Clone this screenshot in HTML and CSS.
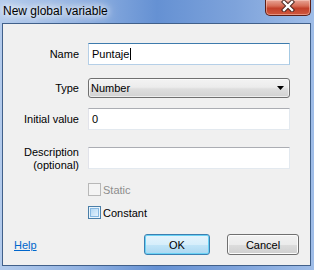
FILE: index.html
```html
<!DOCTYPE html>
<html lang="en">
<head>
  <meta charset="UTF-8">
  <meta name="viewport" content="width=device-width, initial-scale=1.0">
  <title>New global variable</title>
  <link rel="stylesheet" href="styles.css">
</head>
<body>
  <div class="window">
    <div class="titlebar">
      <span class="title">New global variable</span>
      <span class="close-btn">
        <svg width="14" height="12" viewBox="0 0 14 12">
          <path d="M3 2 L11 10 M11 2 L3 10" stroke="#4a2620" stroke-width="4.4" stroke-linecap="square" fill="none"/>
          <path d="M3 2 L11 10 M11 2 L3 10" stroke="#fff" stroke-width="2.4" stroke-linecap="square" fill="none"/>
        </svg>
      </span>
    </div>

    <div class="client">
      <div class="row row-name">
        <label class="field-label">Name</label>
        <div class="textbox focused">Puntaje<span class="caret"></span></div>
      </div>

      <div class="row row-type">
        <label class="field-label">Type</label>
        <div class="combo">
          <span>Number</span>
          <svg width="7" height="4" viewBox="0 0 7 4"><path d="M0 0 H7 L3.5 4 Z" fill="#000"/></svg>
        </div>
      </div>

      <div class="row row-initial">
        <label class="field-label">Initial value</label>
        <div class="textbox">0</div>
      </div>

      <div class="row row-desc">
        <label class="field-label two-line">Description<br>(optional)</label>
        <div class="textbox"></div>
      </div>

      <div class="check-row row-static disabled">
        <span class="checkbox"></span>
        <span>Static</span>
      </div>

      <div class="check-row row-constant">
        <span class="checkbox hot"><span class="check-fill"></span></span>
        <span>Constant</span>
      </div>

      <!-- Dialog buttons -->
      <div class="footer">
        <a class="help" href="#">Help</a>
        <button class="btn btn-ok">OK</button>
        <button class="btn btn-cancel">Cancel</button>
      </div>
    </div>
  </div>
</body>
</html>
```

FILE: styles.css
```css
/* Windows 7 style dialog */
body {
  margin: 0;
  font-family: "Liberation Sans", Arial, sans-serif;
  font-size: 11px;
  color: #000;
}

.window {
  width: 314px;
  height: 270px;
  box-sizing: border-box;
  display: flex;
  flex-direction: column;
  padding: 0 3px 4px 2px;
  background: linear-gradient(90deg, #b3cbec 0%, #93b3e2 25%, #6591d3 50%, #7ea3db 75%, #9fbde8 100%);
}

.titlebar {
  height: 23px;
  display: flex;
  align-items: flex-start;
}

.title {
  padding: 4px 0 0 1px;
  font-size: 12px;
  color: #000;
  text-shadow: 0 0 6px #fff, 0 0 10px #fff, 0 0 14px rgba(255, 255, 255, 0.9);
}

.close-btn {
  margin-left: auto;
  width: 46px;
  height: 16px;
  box-sizing: border-box;
  display: flex;
  justify-content: center;
  align-items: flex-start;
  border: 1px solid #5b1e16;
  border-top: none;
  border-radius: 0 0 5px 5px;
  background: linear-gradient(#e8a597 0%, #d66c56 40%, #c2402a 55%, #d0583e 100%);
  box-shadow: inset 0 0 0 1px rgba(255, 220, 210, 0.45);
}

.client {
  flex: 1;
  border: 1px solid #41608a;
  background: #f0f0f0;
}

/* Label / field rows */
.row {
  display: grid;
  grid-template-columns: 76px 202px;
  column-gap: 9px;
  align-items: center;
  height: 22px;
}

.row-name { margin-top: 19px; }
.row-type { margin-top: 13px; height: 20px; }
.row-initial { margin-top: 10px; }
.row-desc { margin-top: 14px; }

.field-label {
  text-align: right;
}

.two-line {
  align-self: start;
  padding-top: 2px;
  line-height: 13px;
}

.textbox {
  height: 22px;
  box-sizing: border-box;
  display: flex;
  align-items: center;
  padding: 0 3px;
  background: #fff;
  border: 1px solid;
  border-color: #abadb3 #e3e9ef #e3e9ef #e2e3ea;
}

.textbox.focused {
  border-color: #3d7bad #a4c9e3 #b5cfe7 #b5cfe7;
}

.caret {
  display: inline-block;
  width: 1px;
  height: 12px;
  margin-left: 1px;
  background: #000;
}

.combo {
  height: 20px;
  box-sizing: border-box;
  display: flex;
  align-items: center;
  justify-content: space-between;
  padding: 0 5px 0 2px;
  border: 1px solid #707070;
  border-radius: 3px;
  background: linear-gradient(#f3f3f3 0%, #ececec 45%, #dedede 55%, #d2d2d2 100%);
  box-shadow: inset 0 0 0 1px rgba(255, 255, 255, 0.6);
}

/* Checkboxes */
.check-row {
  display: flex;
  align-items: center;
  gap: 2px;
  height: 13px;
  margin-left: 85px;
}

.row-static { margin-top: 17px; }
.row-constant { margin-top: 10px; }

.checkbox {
  width: 13px;
  height: 13px;
  box-sizing: border-box;
  border: 1px solid #8f8f8f;
  background: #f4f4f4;
  padding: 1px;
}

.disabled { color: #8d8d8d; }
.disabled .checkbox { border-color: #b8b8b8; }

.checkbox.hot {
  border-color: #4a7ea8;
  background: #e9f4fc;
}

.check-fill {
  display: block;
  width: 100%;
  height: 100%;
  box-sizing: border-box;
  border: 1px solid #86b8e2;
  background: linear-gradient(135deg, #b4d8f4, #e4f2fd);
}

/* Footer */
.footer {
  display: flex;
  align-items: center;
  margin-top: 15px;
  padding: 0 11px;
}

.help {
  color: #0066cc;
  text-decoration: underline;
}

.btn {
  height: 21px;
  padding: 0;
  font: inherit;
  color: #000;
  border: 1px solid #707070;
  border-radius: 3px;
  background: linear-gradient(#f2f2f2 0%, #ebebeb 50%, #dddddd 50%, #cfcfcf 100%);
  box-shadow: inset 0 0 0 1px #fcfcfc;
}

.btn-ok {
  width: 66px;
  margin-left: auto;
  border-color: #3c7fb1;
  background: linear-gradient(#e5f4fc 0%, #d6eefb 50%, #c2e5f8 50%, #abd8f1 100%);
  box-shadow: inset 0 0 0 1px #6ad2f5;
}

.btn-cancel {
  width: 72px;
  margin-left: 17px;
}
```
